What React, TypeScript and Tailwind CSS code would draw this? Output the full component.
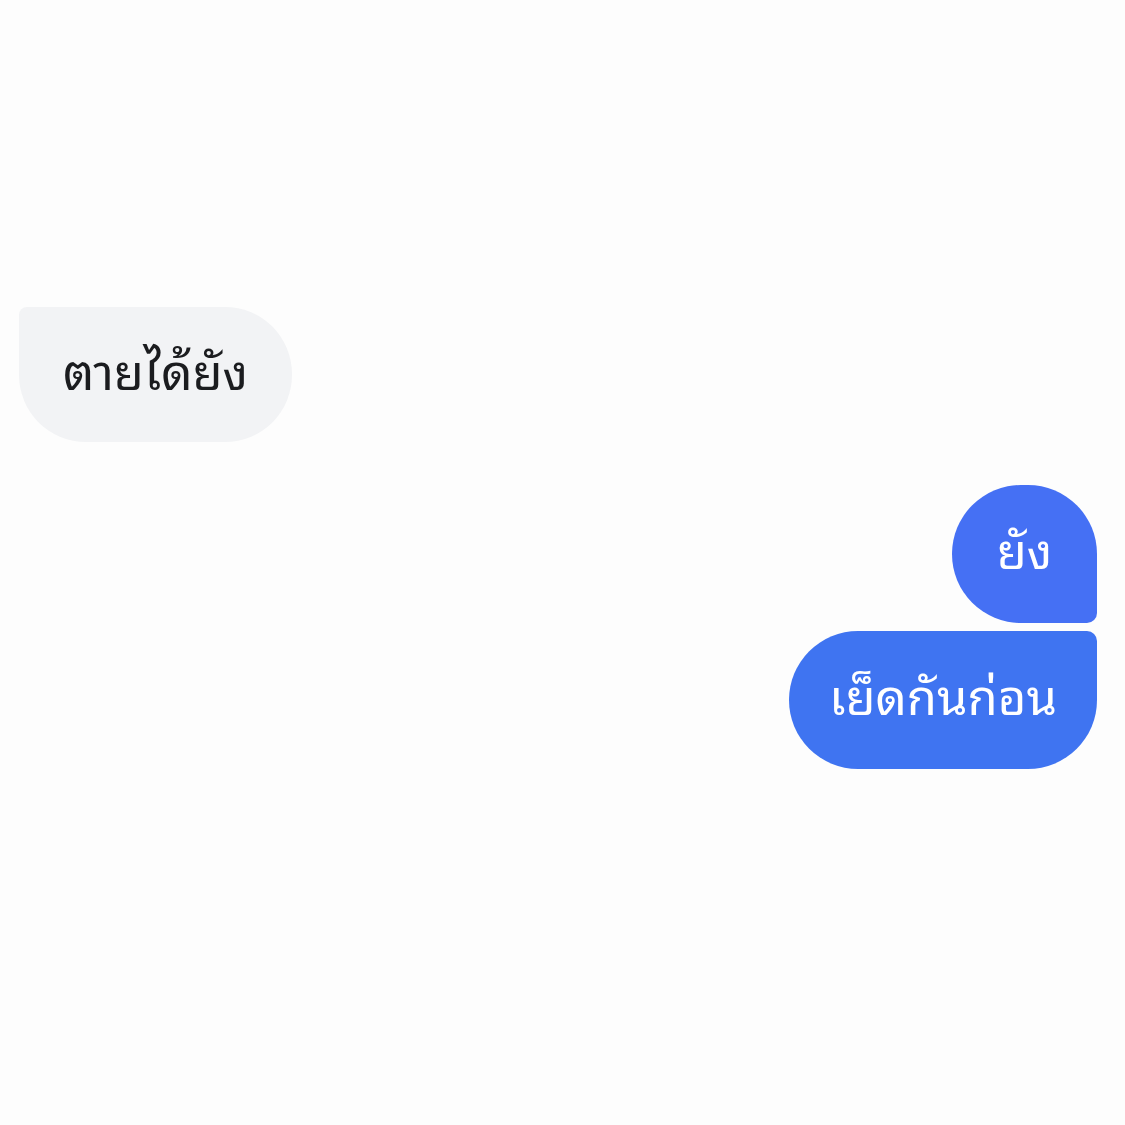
export default function App() {
  const font = { fontFamily: '"Noto Sans Thai Looped", "Noto Sans Thai", "Noto Sans", "DejaVu Sans", sans-serif' };
  return (
    <div className="w-[1125px] h-[1125px] bg-[#fdfdfd] flex flex-col pt-[307px] pl-[19px] pr-[28px]" style={font}>
      <div className="flex justify-start">
        <div className="w-[273px] h-[135px] pb-[12px] flex items-center justify-center bg-[#f2f3f5] text-[#1b1c1f] text-[49px] rounded-[67px] rounded-tl-[8px]">
          ตายได้ยัง
        </div>
      </div>
      <div className="flex flex-col items-end mt-[43px] gap-[8px]">
        <div className="w-[145px] h-[138px] pb-[12px] flex items-center justify-center bg-[#4570f4] text-white text-[49px] rounded-[69px] rounded-br-[10px]">
          ยัง
        </div>
        <div className="w-[308px] h-[138px] pb-[12px] flex items-center justify-center bg-[#3f74f1] text-white text-[49px] rounded-[69px] rounded-tr-[10px]">
          เย็ดกันก่อน
        </div>
      </div>
    </div>
  );
}
